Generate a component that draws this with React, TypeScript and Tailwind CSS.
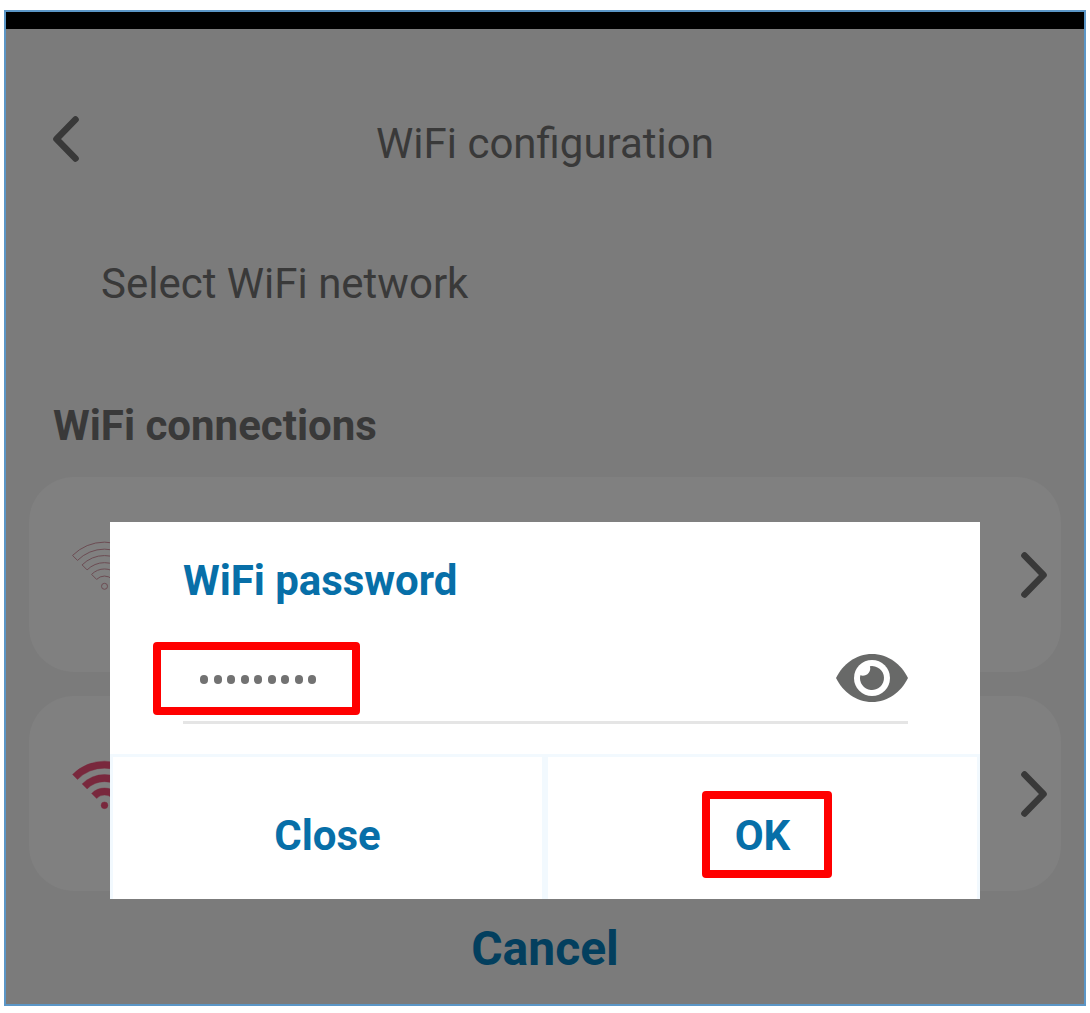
import React from "react";

function Chevron({ left = false }: { left?: boolean }) {
  return (
    <svg width="28" height="48" viewBox="0 0 28 48" fill="none" className="shrink-0">
      <path
        d={left ? "M23.5 4.5L4.5 24L23.5 43.5" : "M4.5 4.5L23.5 24L4.5 43.5"}
        stroke="#393939"
        strokeWidth="6.6"
        strokeLinecap="round"
        strokeLinejoin="round"
      />
    </svg>
  );
}

const bands = [
  "M2.54 14.46A45 45 0 0 1 66.46 14.46L61.5 19.4A38 38 0 0 0 7.5 19.4Z",
  "M12.1 23.9A31.5 31.5 0 0 1 56.9 23.9L51.9 28.9A24.5 24.5 0 0 0 17.1 28.9Z",
  "M21.6 33.4A18 18 0 0 1 47.4 33.4L42.4 38.4A11 11 0 0 0 26.6 38.4Z",
];

function Wifi({ filled = false }: { filled?: boolean }) {
  return (
    <svg
      width="70"
      height="52"
      viewBox="0 0 70 52"
      fill={filled ? "#79283d" : "none"}
      stroke={filled ? "#79283d" : "#6c4c53"}
      strokeWidth={filled ? 0.4 : 1}
    >
      {bands.map((d) => (
        <path key={d} d={d} />
      ))}
      <circle cx="34.5" cy="45.3" r={filled ? 3.4 : 3} />
    </svg>
  );
}

function NetworkRow({ filled = false }: { filled?: boolean }) {
  return (
    <div className="flex h-[195px] items-center justify-between rounded-[45px] bg-[#808080] pl-[41px] pr-[13px]">
      <div className="mb-[15px]">
        <Wifi filled={filled} />
      </div>
      <Chevron />
    </div>
  );
}

function Eye() {
  return (
    <svg width="72" height="48" viewBox="0 0 72 48">
      <path
        d="M0 24C7 10 20 0 36 0S65 10 72 24C65 38 52 48 36 48S7 38 0 24Z"
        fill="#686968"
      />
      <circle cx="36" cy="24" r="18" fill="#fff" />
      <path d="M33.9 12.2A12 12 0 1 1 24.3 21.3C29.5 23.3 35.8 18.5 33.9 12.2Z" fill="#686968" />
    </svg>
  );
}

function PasswordDialog() {
  return (
    <div className="absolute left-[104px] top-[510px] flex h-[377px] w-[870px] flex-col bg-white text-[#076fa8]">
      <div className="h-[232px] pl-[73px] pr-[72px] pt-[34px]">
        <h2 className="h-[50px] text-[42px] font-bold leading-[50px] tracking-[-0.05px]">WiFi password</h2>
        <div className="mt-[36px] flex h-[82px] items-start justify-between border-b-[3px] border-[#e5e5e5]">
          <div className="-ml-[30px] flex h-[73px] w-[207px] items-center gap-[5.5px] rounded-[4px] border-8 border-[#ff0000] pl-[39px] pt-px">
            {Array.from({ length: 9 }, (_, i) => (
              <span key={i} className="h-[9px] w-[8px] rounded-full bg-[#727272]" />
            ))}
          </div>
          <div className="mt-[12px]">
            <Eye />
          </div>
        </div>
      </div>
      <div className="flex flex-1 border-l-[3px] border-r-[3px] border-t-[3px] border-[#f2f9fe] text-[42px] font-bold">
        <button className="w-[432px] border-r-[3px] border-[#f2f9fe] pt-[14px]">Close</button>
        <button className="flex flex-1 items-center justify-center border-l-[3px] border-[#f2f9fe] pl-[9px] pt-[13px]">
          <span className="flex h-[87px] w-[130px] items-center justify-center rounded-[4px] border-8 border-[#ff0000] pr-[9px] pt-[2px]">
            OK
          </span>
        </button>
      </div>
    </div>
  );
}

export default function App() {
  return (
    <div className="h-[1013px] bg-white pl-1 pt-[10px] font-['Roboto',sans-serif]">
      <main className="relative h-[996px] w-[1082px] border-2 border-[#5b96c6] bg-[#7b7b7b] text-[#393939]">
        <div className="h-[17px] bg-black" />
        <header className="grid h-[220px] grid-cols-[1fr_auto_1fr] items-center pl-[46px] pr-[46px]">
          <Chevron left />
          <h1 className="pt-[9px] text-[42px]">WiFi configuration</h1>
        </header>
        <p className="ml-[95px] mt-[5px] h-[60px] text-[42px] leading-[60px]">Select WiFi network</p>
        <h2 className="ml-[47px] mt-[82px] h-[60px] text-[42px] font-bold leading-[60px]">WiFi connections</h2>
        <section className="ml-[23px] mt-[21px] flex w-[1032px] flex-col gap-[24px]">
          <NetworkRow />
          <NetworkRow filled />
        </section>
        <button className="mt-[28px] block w-full text-center text-[48px] font-bold leading-[60px] text-[#033f5e]">
          Cancel
        </button>
        <PasswordDialog />
      </main>
    </div>
  );
}
